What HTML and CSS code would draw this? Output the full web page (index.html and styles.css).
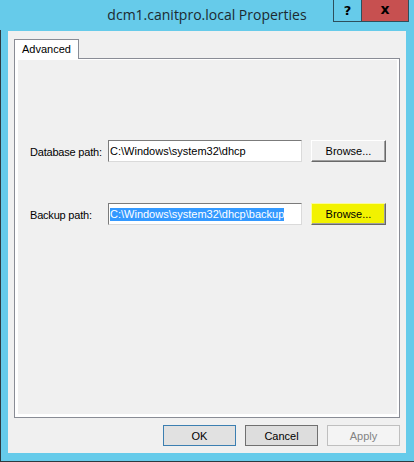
FILE: index.html
```html
<!DOCTYPE html>
<html>
<head>
<meta charset="utf-8">
<link rel="stylesheet" href="styles.css">
</head>
<body>
<div class="window">
  <div class="titlebar">
    <div class="tb-spacer"></div>
    <div class="title">dcm1.canitpro.local Properties</div>
    <div class="tb-controls">
      <div class="tb-btn tb-help">?</div>
      <div class="tb-btn tb-close">x</div>
    </div>
  </div>
  <div class="client">
    <div class="tabs">
      <div class="tab">Advanced</div>
    </div>
    <div class="panel">
      <div class="page">
        <div class="row">
          <div class="label">Database path:</div>
          <div class="textbox"><span>C:\Windows\system32\dhcp</span></div>
          <div class="browse">Browse...</div>
        </div>
        <div class="row">
          <div class="label">Backup path:</div>
          <div class="textbox"><span class="sel">C:\Windows\system32\dhcp\backup</span></div>
          <div class="browse browse-hl">Browse...</div>
        </div>
      </div>
    </div>
    <div class="buttons">
      <div class="btn btn-default">OK</div>
      <div class="btn btn-cancel">Cancel</div>
      <div class="btn btn-disabled">Apply</div>
    </div>
  </div>
</div>
</body>
</html>
```
FILE: styles.css
```css
html, body {
  margin: 0;
  padding: 0;
}
body {
  font-family: "Liberation Sans", Arial, sans-serif;
  font-size: 11px;
  color: #000;
}
.window {
  width: 414px;
  height: 462px;
  box-sizing: border-box;
  background:
    linear-gradient(to bottom, #66cbea 30px, #2e3a3f 30px) left top / 1px 100% no-repeat,
    #66cbea;
  border-bottom: 1px solid #2e3a3f;
  display: flex;
  flex-direction: column;
}
.titlebar {
  height: 31px;
  display: grid;
  grid-template-columns: 1fr auto 1fr;
  flex: none;
}
.title {
  font-family: "Open Sans", "Noto Sans", sans-serif;
  font-size: 14px;
  color: #1c2a30;
  line-height: 20px;
  padding-top: 5px;
  white-space: nowrap;
}
.tb-controls {
  display: flex;
  justify-content: flex-end;
  align-items: flex-start;
  padding-right: 5px;
}
.tb-btn {
  box-sizing: border-box;
  height: 22px;
  border: 1px solid #2d4f5c;
  border-top: none;
  display: flex;
  align-items: center;
  justify-content: center;
  font-family: "DejaVu Sans", sans-serif;
  font-weight: bold;
  color: #000;
}
.tb-help {
  width: 29px;
  background: #66cbea;
  font-size: 13px;
  padding-bottom: 1px;
}
.tb-close {
  width: 48px;
  margin-left: -1px;
  background: #c75050;
  font-size: 14px;
  padding-bottom: 3px;
}
.client {
  flex: 1;
  margin: 0 8px 8px 8px;
  background: #f0f0f0;
  padding: 8px 6px 0 6px;
  display: flex;
  flex-direction: column;
}
.tabs {
  display: flex;
  height: 19px;
}
.tab {
  box-sizing: border-box;
  height: 20px;
  width: 65px;
  background: #fff;
  border: 1px solid #898c95;
  border-bottom: none;
  padding-left: 7px;
  line-height: 18px;
  position: relative;
  z-index: 1;
}
.panel {
  box-sizing: border-box;
  height: 360px;
  border: 1px solid #898c95;
  background: #fff;
  padding: 1px 2px 3px 3px;
}
.page {
  height: 100%;
  background: #f0f0f0;
  padding: 80px 0 0 12px;
  box-sizing: border-box;
  display: flex;
  flex-direction: column;
  gap: 41px;
}
.row {
  display: flex;
  align-items: center;
  height: 22px;
}
.label {
  width: 78px;
  padding-top: 1px;
  white-space: nowrap;
  letter-spacing: -0.2px;
}
.textbox {
  box-sizing: border-box;
  width: 194px;
  height: 22px;
  background: #fff;
  border-top: 1px solid #7b7b7b;
  border-left: 1px solid #7b7b7b;
  border-right: 1px solid #dadada;
  border-bottom: 1px solid #dadada;
  padding-left: 1px;
  display: flex;
  align-items: center;
  white-space: nowrap;
  overflow: hidden;
}
.textbox span {
  line-height: 13px;
}
.sel {
  background: #3399ff;
  color: #fff;
}
.browse {
  box-sizing: border-box;
  width: 75px;
  height: 22px;
  margin-left: 9px;
  background: #f0f0f0;
  border-top: 1px solid #fff;
  border-left: 1px solid #fff;
  border-right: 1px solid #696969;
  border-bottom: 1px solid #696969;
  box-shadow: inset -1px -1px 0 #a0a0a0;
  display: flex;
  align-items: center;
  justify-content: center;
}
.browse-hl {
  background: #f2f200;
  border-top-color: #fbfb9a;
  border-left-color: #fbfb9a;
}
.buttons {
  display: flex;
  justify-content: flex-end;
  gap: 9px;
  margin-top: 7px;
}
.btn {
  box-sizing: border-box;
  width: 73px;
  height: 21px;
  border: 1px solid #adadad;
  background: #e1e1e1;
  display: flex;
  align-items: center;
  justify-content: center;
}
.btn-default {
  border-color: #3c7fb1;
}
.btn-cancel {
  border-color: #707070;
  background: #dddddd;
}
.btn-disabled {
  border-color: #bfbfbf;
  background: #f4f4f4;
  color: #838383;
}
```
